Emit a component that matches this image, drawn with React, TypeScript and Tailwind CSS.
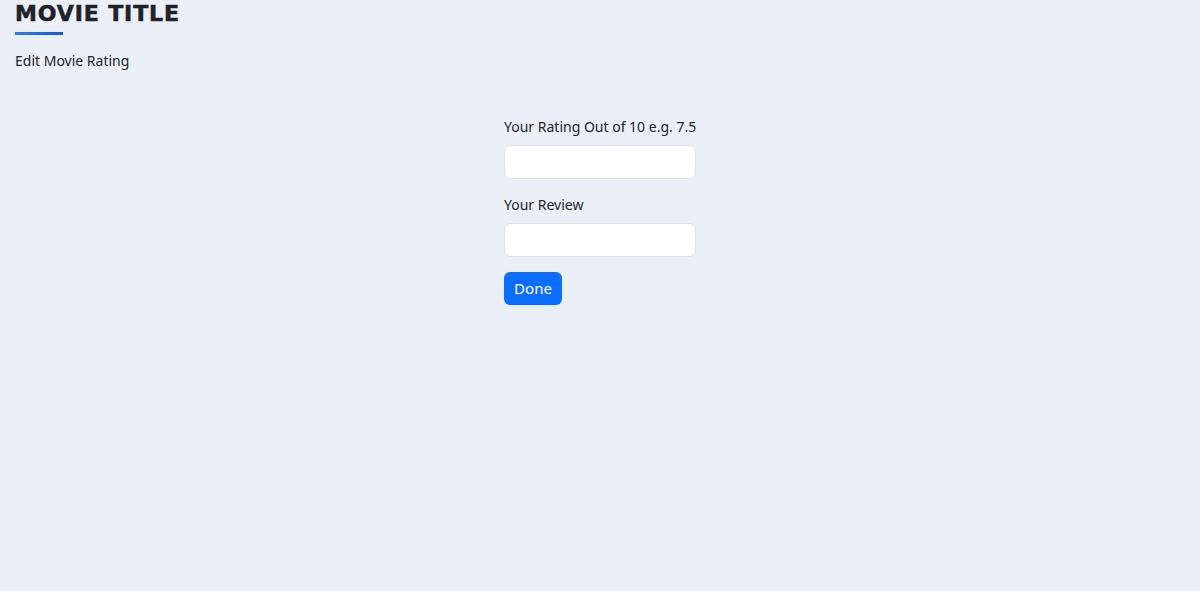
export default function App() {
  return (
    <div className="min-h-screen bg-[#ebeff8] text-[#212529] font-['Noto_Sans',sans-serif]">
      <header className="px-[15px]">
        <h1 className="font-['DejaVu_Sans',sans-serif] text-[22px] font-bold leading-[28px] tracking-[0.04em] text-[#1f2329] [-webkit-text-stroke:0.6px_#1f2329]">
          MOVIE TITLE
        </h1>
        <div className="mt-[4px] h-[3px] w-12 bg-gradient-to-r from-[#2b7de9] to-[#1a55d6]" />
        <p className="mt-[14px] text-[14px] leading-6">Edit Movie Rating</p>
      </header>

      <form className="mx-auto mt-[42px] flex w-[192px] flex-col">
        <label className="text-[14px] leading-6 whitespace-nowrap">Your Rating Out of 10 e.g. 7.5</label>
        <input
          type="text"
          className="mt-[6px] h-[34px] rounded-md border border-[#dee2e6] bg-white px-3"
        />
        <label className="mt-[14px] text-[14px] leading-6">Your Review</label>
        <input
          type="text"
          className="mt-[6px] h-[34px] rounded-md border border-[#dee2e6] bg-white px-3"
        />
        <div className="mt-[15px]">
          <button
            type="button"
            className="h-[33px] w-[58px] rounded-md bg-[#0d6efd] text-[15px] text-white"
          >
            Done
          </button>
        </div>
      </form>
    </div>
  )
}
